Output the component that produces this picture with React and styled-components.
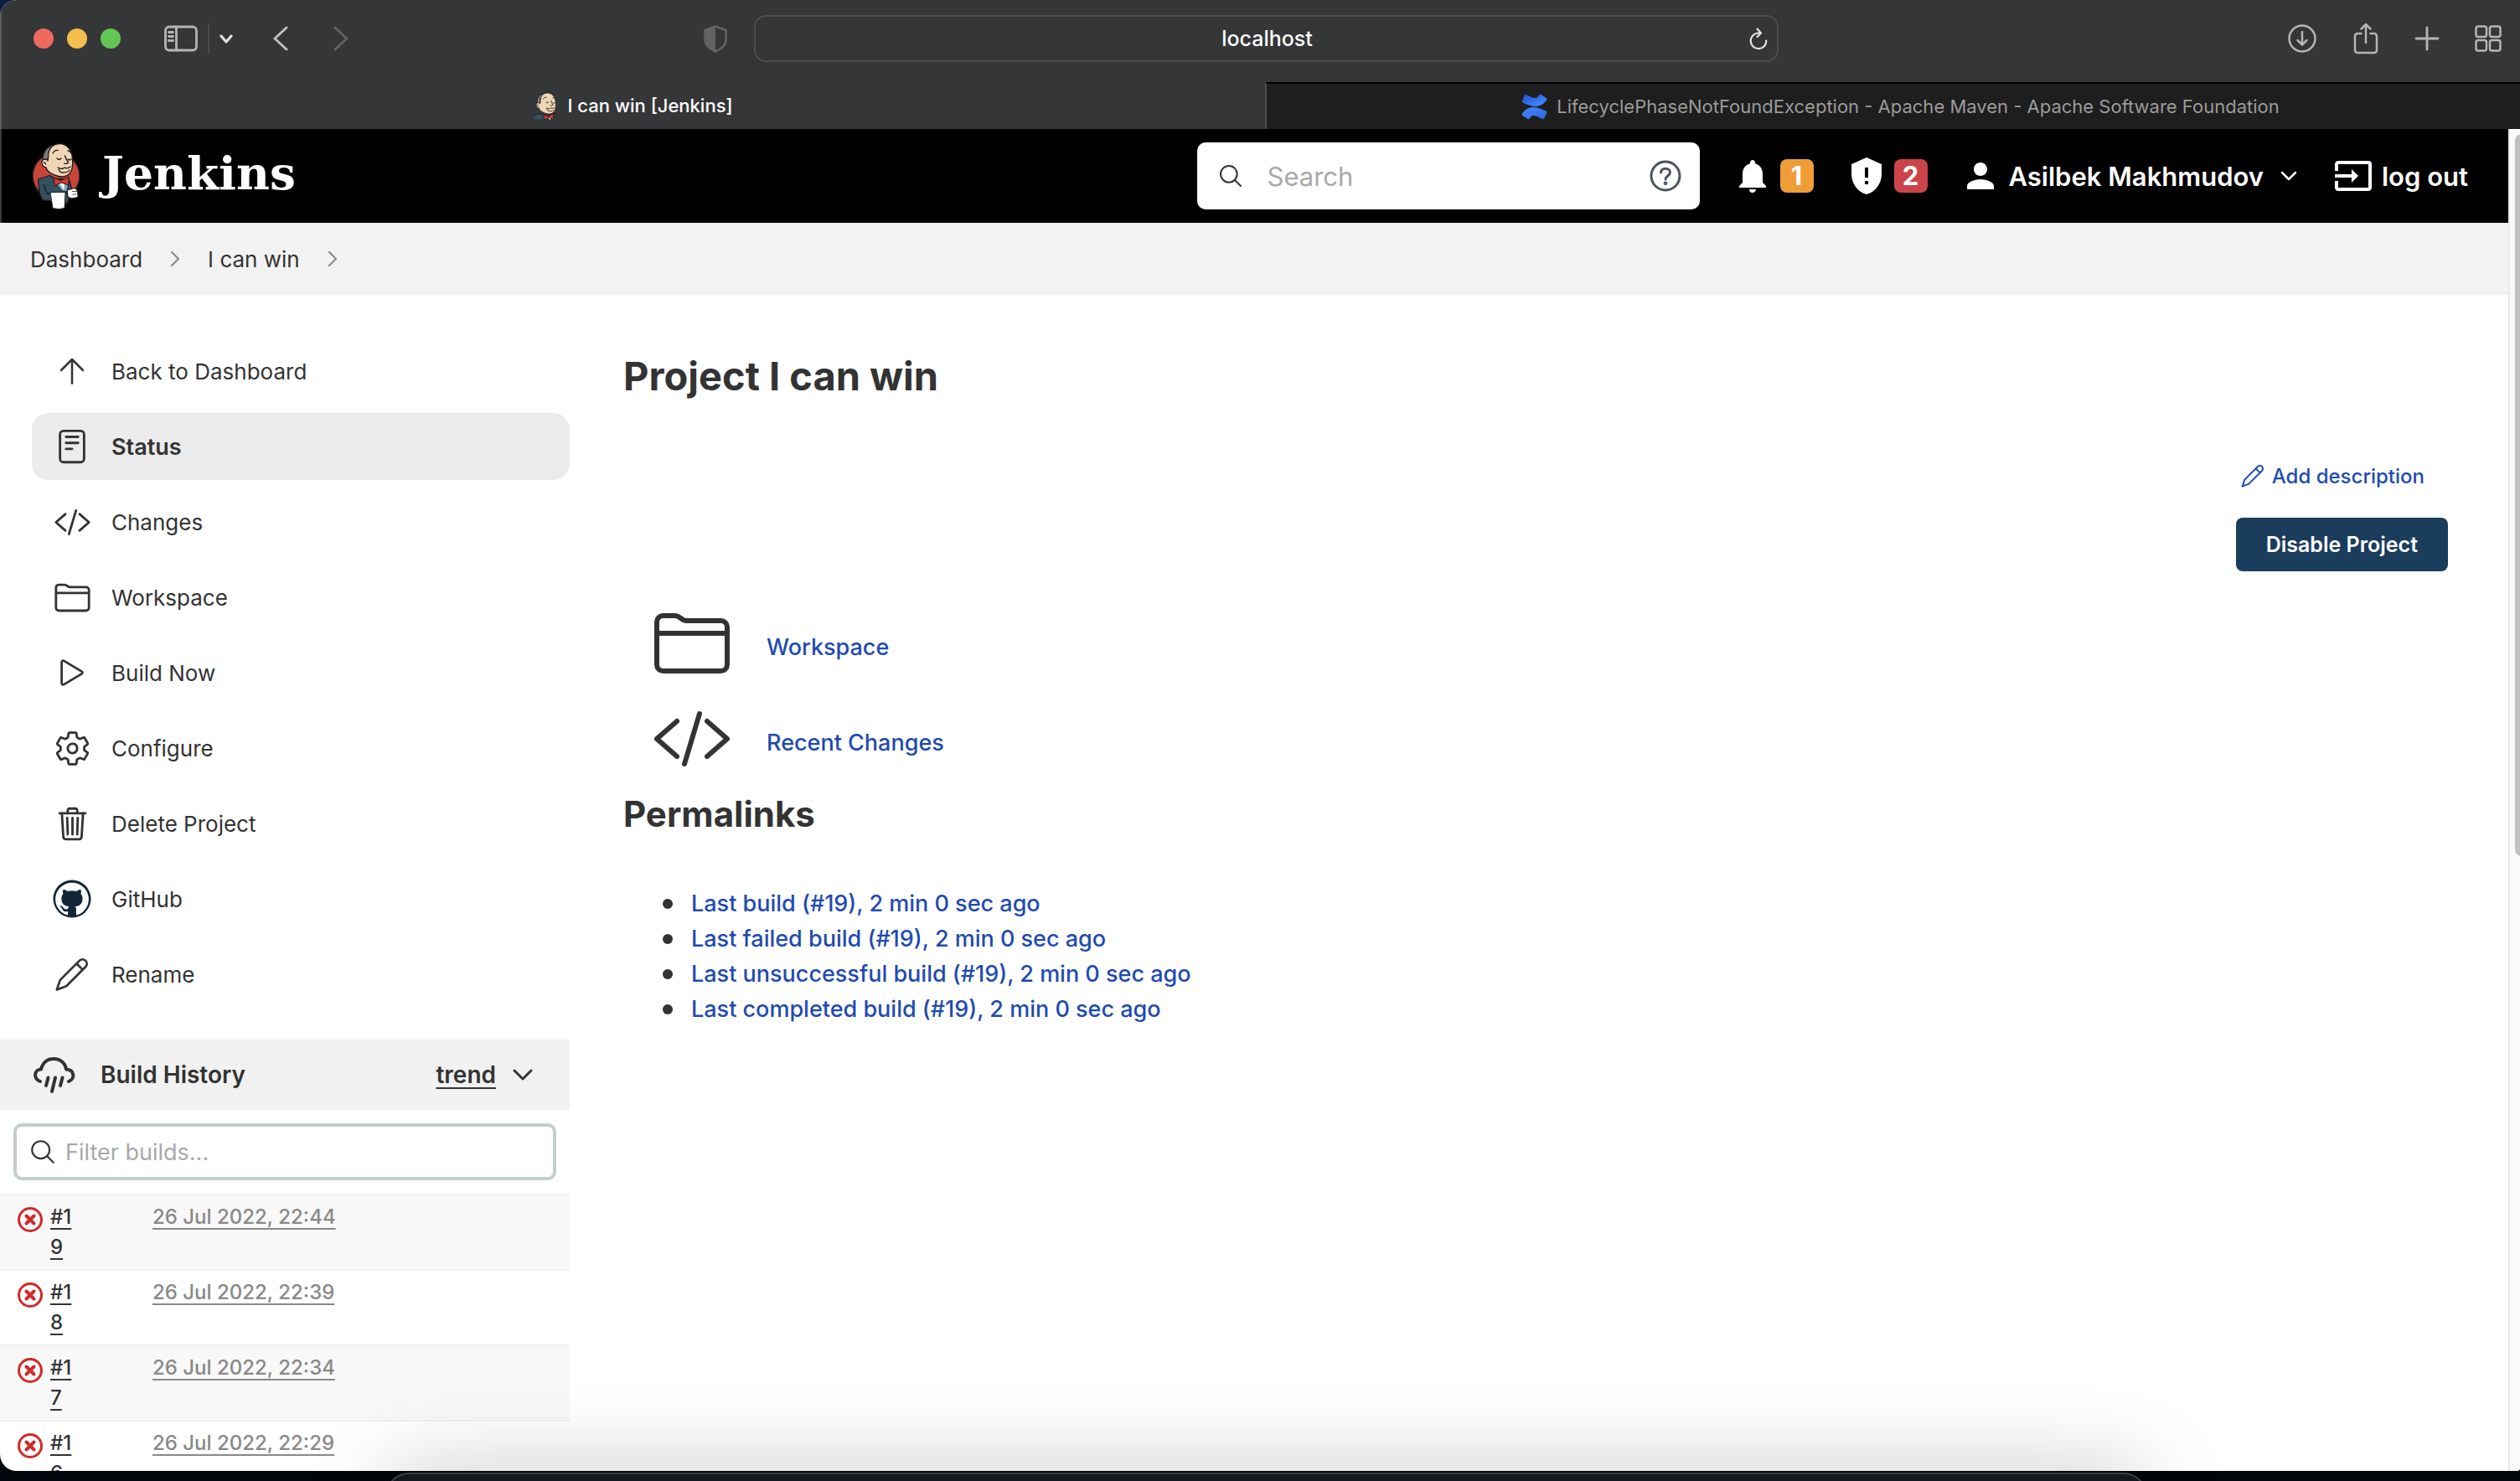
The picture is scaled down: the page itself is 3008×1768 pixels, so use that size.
import React from "react";
import styled, { createGlobalStyle, css } from "styled-components";
import {
  IoReaderOutline,
  IoCodeSlashOutline,
  IoFolderOutline,
  IoPlayOutline,
  IoSettingsOutline,
  IoTrashOutline,
  IoSearchOutline,
} from "react-icons/io5";
import { MdNotifications, MdPerson, MdInput } from "react-icons/md";

const ink = "#333333";
const link = "#1f4bb0";
const sans = `Inter, "Liberation Sans", sans-serif`;

const GlobalStyle = createGlobalStyle`
  *, *::before, *::after { box-sizing: border-box; }
  body { margin: 0; font-family: ${sans}; color: ${ink}; background: #01060d; }
  button, input { font: inherit; color: inherit; background: none; border: 0; padding: 0; margin: 0; outline: 0; }
  a { color: inherit; text-decoration: none; }
  svg { display: block; flex: none; }
`;

/* ---------- desktop and window ---------- */

const Desktop = styled.div`
  display: flex;
  flex-direction: column;
  height: 100vh;
  overflow: hidden;
  background: linear-gradient(#0b2147, #01060d 10%);
`;

const Window = styled.div`
  flex: 1;
  min-height: 0;
  display: flex;
  flex-direction: column;
  overflow: hidden;
  border-radius: 20px 0 4px 20px;
  background: #ffffff;
`;

const DockStrip = styled.footer`
  flex: none;
  height: 12px;
  padding: 2px 445px 0 460px;
`;

const Dock = styled.div`
  height: 60px;
  border: 2px solid #3a3f44;
  border-radius: 28px;
  background: #13181f;
  box-shadow: 0 0 100px rgba(0, 0, 0, 0.26);
`;

/* ---------- browser chrome ---------- */

const Chrome = styled.header`
  flex: none;
  background: #353638;
  box-shadow: inset 2px 0 #5a5b5d;
`;

const Toolbar = styled.div`
  display: grid;
  grid-template-columns: minmax(0, 900fr) minmax(0, 1223fr) minmax(0, 885fr);
  align-items: center;
  height: 98px;
  padding-bottom: 6px;
  color: #b4b5b6;
`;

const ToolGroup = styled.div`
  display: flex;
  align-items: center;
  justify-content: ${(p) => p.$align || "flex-start"};
  gap: ${(p) => p.$gap || 0}px;
  padding: ${(p) => p.$pad || "0"};
`;

const Light = styled.button`
  width: 24px;
  height: 24px;
  border-radius: 50%;
  background: ${(p) => p.$color};
`;

const ToolButton = styled.button`
  display: flex;
  align-items: center;
  justify-content: center;
  color: ${(p) => p.$color || "inherit"};
`;

const Divider = styled.span`
  width: 2px;
  height: 36px;
  background: #4a4b4d;
`;

const Spacer = styled.span`
  flex: 1;
`;

const AddressBar = styled.div`
  display: flex;
  align-items: center;
  height: 56px;
  padding: 0 10px 0 36px;
  border: 2px solid #4c4d4f;
  border-radius: 14px;
  color: #e4e4e4;
`;

const Address = styled.input`
  flex: 1;
  min-width: 0;
  text-align: center;
  font-size: 25px;
  font-weight: 500;
  color: #ffffff;
`;

const TabStrip = styled.div`
  display: grid;
  grid-template-columns: minmax(0, 1510fr) minmax(0, 1498fr);
  height: 56px;
`;

const Tab = styled.button`
  display: flex;
  align-items: center;
  justify-content: center;
  gap: 12px;
  font-size: 22px;
  font-weight: 500;
  color: #ffffff;
  ${(p) =>
    p.$idle &&
    css`
      gap: 10px;
      background: #1e1e1e;
      color: #9b9b9b;
      font-weight: 400;
      border-left: 2px solid #4a4b4d;
      border-top: 2px solid #000000;
      padding-left: 16px;
    `}
`;

/* ---------- page frame ---------- */

const Viewport = styled.div`
  flex: 1;
  min-height: 0;
  display: flex;
`;

const Page = styled.div`
  flex: 1;
  min-width: 0;
  overflow: hidden;
`;

const ScrollTrack = styled.div`
  width: 14px;
  padding: 6px 0 0 6px;
  border-left: 2px solid #e8e8e8;
  background: #fafafa;
  overflow: hidden;
`;

const ScrollThumb = styled.div`
  width: 16px;
  height: 54%;
  border-radius: 8px;
  background: #c1c1c1;
`;

/* ---------- Jenkins header ---------- */

const Masthead = styled.header`
  display: flex;
  align-items: center;
  height: 112px;
  padding: 0 48px 0 38px;
  background: #000000;
  color: #ffffff;
  box-shadow: inset 2px 0 #3a3a3a;
`;

const Brand = styled.a`
  display: flex;
  align-items: center;
  gap: 26px;
  font-family: "DejaVu Serif", serif;
  font-weight: 700;
  font-size: 55px;
  line-height: 64px;
`;

const BrandName = styled.span`
  padding-bottom: 6px;
`;

const SearchBox = styled.label`
  display: flex;
  align-items: center;
  width: 600px;
  height: 80px;
  margin-left: auto;
  padding: 0 22px 0 24px;
  gap: 28px;
  border-radius: 10px;
  background: #ffffff;
  color: ${ink};
`;

const TextInput = styled.input`
  flex: 1;
  min-width: 0;
  font-size: ${(p) => p.$size}px;
  &::placeholder { color: #a9a9a9; opacity: 1; }
`;

const HeaderLink = styled.a`
  display: flex;
  align-items: center;
  gap: ${(p) => p.$gap}px;
  margin-left: ${(p) => p.$space}px;
  font-size: 31px;
  font-weight: 600;
`;

const Badge = styled.span`
  width: 40px;
  height: 40px;
  border-radius: 8px;
  line-height: 40px;
  text-align: center;
  font-weight: 700;
  background: ${(p) => p.$color};
`;

const Crumbs = styled.nav`
  display: flex;
  align-items: center;
  height: 86px;
  padding: 0 36px;
  gap: 33px;
  background: #f2f2f2;
  font-size: 26px;
  color: ${ink};
`;

const CrumbArrow = styled.span`
  color: #8c8c8c;
`;

/* ---------- body ---------- */

const Body = styled.div`
  display: flex;
`;

const Side = styled.aside`
  width: 680px;
  flex: none;
`;

const Tasks = styled.nav`
  display: flex;
  flex-direction: column;
  gap: 10px;
  padding: 51px 0 38px 38px;
`;

const Task = styled.a`
  display: flex;
  align-items: center;
  gap: 24px;
  height: 80px;
  padding-left: 25px;
  border-radius: 20px;
  font-size: 26px;
  ${(p) => p.$active && "background: #ebebeb; font-size: 27px; font-weight: 600;"}
`;

const TaskIcon = styled.span`
  display: flex;
  justify-content: center;
  width: 46px;
`;

const HistoryHead = styled.div`
  display: flex;
  align-items: center;
  justify-content: space-between;
  height: 84px;
  padding: 0 44px 0 38px;
  background: #f1f1f1;
  font-size: 28px;
  font-weight: 600;
`;

const HeadGroup = styled.div`
  display: flex;
  align-items: center;
  gap: ${(p) => p.$gap}px;
`;

const TrendLink = styled.a`
  text-decoration: underline;
  text-decoration-thickness: 2px;
  text-underline-offset: 5px;
`;

const FilterBox = styled.label`
  display: flex;
  align-items: center;
  height: 68px;
  margin: 16px;
  padding: 0 14px;
  gap: 10px;
  border: 4px solid #c3ccd1;
  border-radius: 10px;
`;

const Builds = styled.table`
  width: 100%;
  border-collapse: collapse;
  font-size: 24px;
  line-height: 36px;
`;

const BuildRow = styled.tr`
  border-top: 2px solid #f0f0f0;
  &:nth-child(odd) { background: #f8f8f8; }
`;

const Cell = styled.td`
  width: ${(p) => p.$width || "auto"};
  padding: 8px 0 8px ${(p) => p.$left || 0}px;
  vertical-align: top;
`;

const BuildLink = styled.a`
  display: block;
  width: ${(p) => p.$width || "auto"};
  overflow-wrap: anywhere;
  font-weight: 500;
  color: ${(p) => p.$color || ink};
  text-decoration: underline;
  text-decoration-thickness: 2px;
  text-underline-offset: 5px;
`;

const StatusIcon = styled.span`
  display: block;
  padding-top: 5px;
`;

const Main = styled.main`
  flex: 1;
  min-width: 0;
  padding: 67px 72px 0 64px;
`;

const Title = styled.h1`
  margin: 0;
  font-size: 47px;
  line-height: 60px;
  font-weight: 700;
`;

const Actions = styled.div`
  display: flex;
  flex-direction: column;
  align-items: flex-end;
  gap: 25px;
  padding-top: 64px;
`;

const AddLink = styled.a`
  display: flex;
  align-items: center;
  gap: 8px;
  height: 50px;
  padding-right: 28px;
  font-size: 24px;
  font-weight: 500;
  color: ${link};
`;

const DisableButton = styled.button`
  height: 64px;
  padding: 0 36px;
  border-radius: 8px;
  background: #1b3d5c;
  color: #ffffff;
  font-size: 25px;
  font-weight: 600;
`;

const Shortcuts = styled.div`
  display: flex;
  flex-direction: column;
  gap: 18px;
  padding: 38px 0 0 34px;
`;

const Shortcut = styled.a`
  display: flex;
  align-items: center;
  gap: 41px;
  color: ${ink};
`;

const ShortcutLabel = styled.span`
  padding-top: 8px;
  font-size: 27px;
  font-weight: 550;
  color: ${link};
`;

const Subtitle = styled.h2`
  margin: 16px 0 0;
  font-size: 42px;
  line-height: 52px;
  font-weight: 700;
`;

const Permalinks = styled.ul`
  margin: 60px 0 0;
  padding: 0 0 0 47px;
  list-style: none;
  font-size: 27px;
  line-height: 42px;
`;

const PermalinkItem = styled.li`
  display: flex;
  align-items: center;
  gap: 22px;
  &::before {
    content: "";
    width: 12px;
    height: 12px;
    border-radius: 50%;
    background: ${ink};
  }
`;

const Permalink = styled.a`
  font-weight: 550;
  color: ${link};
`;

/* ---------- drawings ---------- */

const Line = ({ w, h, box, sw = 2.5, children, ...rest }) => (
  <svg width={w} height={h} viewBox={box || `0 0 ${w} ${h}`} fill="none" stroke="currentColor"
    strokeWidth={sw} strokeLinecap="round" strokeLinejoin="round" aria-hidden="true" {...rest}>
    {children}
  </svg>
);

const Chevron = ({ w, h, sw, dir = "down" }) => {
  const d = {
    down: `M2 2L${w / 2} ${h - 2}L${w - 2} 2`,
    left: `M${w - 2} 2L2 ${h / 2}L${w - 2} ${h - 2}`,
    right: `M2 2L${w - 2} ${h / 2}L2 ${h - 2}`,
  }[dir];
  return <Line w={w} h={h} sw={sw}><path d={d} /></Line>;
};

const ArrowUpIcon = () => (
  <Line w={44} h={44}>
    <path d="M9 21L22 8L35 21M22 8.500V36.500" />
  </Line>
);

const PencilIcon = ({ size, sw }) => (
  <Line w={size} h={size} box="0 0 45 45" sw={sw}>
    <path d="M4 41L8 29.500L31.500 6a5.300 5.300 0 0 1 7.500 7.500L15.500 37L4 41.500zM28 9.500L35.500 17" />
  </Line>
);

const SidebarIcon = () => (
  <Line w={40} h={32} sw={2.8}>
    <rect x="1.500" y="2" width="37" height="28" rx="4.500" />
    <path d="M14.500 2v28M5.500 8.500h5M5.500 13.500h5M5.500 18.500h5" />
  </Line>
);

const PrivacyIcon = () => (
  <svg width="28" height="33" viewBox="0 0 28 33" aria-hidden="true">
    <path d="M14 1.500L26.500 6v12c0 6.500-6 10.500-12.500 13.500C7.500 28.500 1.500 24.500 1.500 18V6z" fill="none" stroke="currentColor" strokeWidth="2.500" strokeLinejoin="round" />
    <path d="M14 1.500V31.500C7.500 28.500 1.500 24.500 1.500 18V6z" fill="currentColor" />
  </svg>
);

const ReloadIcon = () => (
  <Line w={24} h={28} sw={2.2}>
    <path d="M14.500 7.500H12A9.300 9.300 0 1 0 21.300 16.500M10.500 2.500L15 7.500L10.500 12" />
  </Line>
);

const DownloadIcon = () => (
  <Line w={36} h={36}>
    <circle cx="18" cy="18" r="15.500" />
    <path d="M18 10v15M12.500 20L18 25.500L23.500 20" />
  </Line>
);

const ShareIcon = () => (
  <Line w={32} h={40}>
    <path d="M10.500 14H6a3 3 0 0 0-3 3v17a3 3 0 0 0 3 3h20a3 3 0 0 0 3-3V17a3 3 0 0 0-3-3h-4.500M16 25V3M10.500 8.500L16 3l5.500 5.500" />
  </Line>
);

const PlusIcon = () => (
  <Line w={30} h={30} sw={2.8}><path d="M15 2v26M2 15h26" /></Line>
);

const GridIcon = () => (
  <Line w={32} h={32}>
    {[[1.5, 1.5], [18, 1.5], [1.5, 18], [18, 18]].map(([x, y]) => (
      <rect key={`${x}-${y}`} x={x} y={y} width="12.500" height="12.500" rx="2.500" />
    ))}
  </Line>
);

const Head = () => (
  <g stroke="#1d1a1a" strokeWidth="1.300" strokeLinejoin="round" strokeLinecap="round">
    <path d="M26 3C18 5 13 10 13 21L18 22L22 12z" fill="#7d7a7a" />
    <path d="M20 12C22 5 27 1.500 33 1.500C41 1.500 47 8 48 16C49 22 49 28 47.500 33C45 40 38 42 32 40.500C25 39 18 35 17 30C11 29 10 20 15.500 20C18 20 19 21 19 22C20 19 19.500 15 20 12z" fill="#f0d6b7" />
    <path d="M14 24q2-1 2.500 2M25 13q2-4 6-3.500M43 10q3 0 4 3M30 19q2.500 3 5 0M43 20q2 2 4 0M39.500 16q1 4 4 8q-2 2.500-5 1M31 30q5 3 8 0q3 2 7-1M32 32q2 5 6 4q5 0 7-3" fill="none" />
  </g>
);

const Bow = () => (
  <path d="M26 42l8.500 3.500L44 41l0 10-9-3-8 4z" fill="#d33833" stroke="#1d1a1a" strokeWidth="1" strokeLinejoin="round" />
);

const Butler = () => (
  <svg width="58" height="80" viewBox="0 0 58 80" aria-hidden="true">
    <ellipse cx="29" cy="40" rx="28" ry="27.500" fill="#c8453a" stroke="#24201f" strokeWidth="1.500" />
    <path d="M7.500 44L21 39.500l8 4 15 .5 4 12-5 15-30-2C9 64 8 54 7.500 44z" fill="#335061" stroke="#1d1a1a" strokeWidth="1.300" strokeLinejoin="round" />
    <path d="M28 48l16-1-2 12-6-1z" fill="#81b0c4" stroke="#1d1a1a" strokeWidth="1" strokeLinejoin="round" />
    <path d="M33 48h6l-1 9z" fill="#ffffff" />
    <path d="M14 50l4 11h24" fill="none" stroke="#1d1a1a" strokeWidth="1.300" />
    <Head />
    <Bow />
    <path d="M22 59.500h18l-1 19q-7 2-14 0z" fill="#ffffff" stroke="#2a2a2a" strokeWidth="1" />
    <path d="M42 57l9-2.500q4.500 1 4 11l-8 1.500-4-2z" fill="#ffffff" stroke="#1d1a1a" strokeWidth="1.200" />
    <path d="M48 58.500h6M48.500 62h5M41 67l1 7" fill="none" stroke="#555555" strokeWidth="1" />
  </svg>
);

const ButlerFavicon = () => (
  <svg width="30" height="33" viewBox="4 0 47 52" aria-hidden="true">
    <path d="M4 52q1-9 14-11l14 4 10 0q8 2 8 7z" fill="#335061" stroke="#1d1a1a" />
    <path d="M33 46h6l-1 7z" fill="#ffffff" />
    <Head />
    <Bow />
  </svg>
);

const ConfluenceIcon = () => (
  <svg width="33" height="33" viewBox="0 0 33 33" aria-hidden="true">
    <defs>
      <linearGradient id="cf-a" x1="0" y1="0" x2="1" y2="1">
        <stop offset="0.200" stopColor="#3f80f7" /><stop offset="1" stopColor="#2f68e4" />
      </linearGradient>
      <linearGradient id="cf-b" x1="0" y1="0" x2="1" y2="1">
        <stop offset="0.100" stopColor="#2456d0" /><stop offset="0.700" stopColor="#3f80f7" />
      </linearGradient>
    </defs>
    <path d="M2 24.500c-.8 1.200-.5 2 .3 2.600l6.300 3.900c.9.500 1.700.3 2.300-.6 2.600-4.300 5-4.200 9.500-2.100l5.800 2.700c.9.400 1.800 0 2.200-.9l2.800-6.500c.4-.9 0-1.700-.8-2.100C18.500 15.500 9 14.500 2 24.500z" fill="url(#cf-a)" />
    <path d="M31 8.500c.8-1.200.5-2-.3-2.600L24.400 2c-.9-.5-1.700-.3-2.300.6-2.600 4.300-5 4.200-9.500 2.100L6.800 2c-.9-.4-1.800 0-2.200.9L1.800 9.400c-.4.900 0 1.700.8 2.100C14.500 17.500 24 18.500 31 8.500z" fill="url(#cf-b)" />
  </svg>
);

const HelpIcon = () => (
  <Line w={38} h={38} sw={3}>
    <g stroke="#4d545d">
      <circle cx="19" cy="19" r="17" />
      <path d="M13.500 15c.3-3.500 2.600-4.800 5.500-4.800 3.200 0 5.500 1.800 5.500 4.600 0 4.200-5.500 4.200-5.500 8.200" />
      <circle cx="19" cy="27.800" r="0.900" fill="#4d545d" />
    </g>
  </Line>
);

const ShieldAlertIcon = () => (
  <svg width="48" height="48" viewBox="0 0 24 24" fill="currentColor" fillRule="evenodd" aria-hidden="true">
    <path d="M12 1L3 5v6c0 5.550 3.840 10.740 9 12 5.160-1.260 9-6.450 9-12V5l-9-4zM11 7h2v6h-2zM11 15h2v2h-2z" />
  </svg>
);

const GithubIcon = () => (
  <svg width="46" height="46" viewBox="0 0 46 46" aria-hidden="true">
    <circle cx="23" cy="23" r="22.500" fill="#132638" />
    <g transform="translate(3.200 3.200) scale(1.650)">
      <path fill="#ffffff" d="M12 .3a12 12 0 0 0-3.800 23.400c.6.100.8-.3.800-.6v-2c-3.300.7-4-1.600-4-1.600-.6-1.400-1.400-1.800-1.400-1.800-1-.7.1-.7.100-.7 1.200 0 1.900 1.200 1.900 1.200 1 1.800 2.800 1.300 3.500 1 0-.8.400-1.300.7-1.600-2.700-.3-5.500-1.300-5.500-6 0-1.200.5-2.300 1.300-3.100-.2-.4-.6-1.600 0-3.200 0 0 1-.3 3.400 1.200a11.500 11.500 0 0 1 6 0c2.300-1.500 3.300-1.200 3.300-1.200.6 1.600.2 2.800 0 3.200.9.800 1.300 1.900 1.300 3.200 0 4.600-2.800 5.600-5.500 5.900.5.400.9 1 .9 2.200v3.300c0 .3.100.7.800.6A12 12 0 0 0 12 .3" />
    </g>
  </svg>
);

const RainIcon = () => (
  <Line w={52} h={46} sw={4}>
    <path d="M10 31C2 28 2 17 11 16.500C13 8 19 4 26 4c8 0 14 5 15 12.500C51 17 52 28 44 31" />
    <path d="M19.500 26.500L17 36M28 26.500L24 43M36.500 26.500L34 36" />
  </Line>
);

const FailedIcon = () => (
  <svg width="32" height="32" viewBox="0 0 32 32" fill="none" stroke="#d02a2a" role="img" aria-label="Failed">
    <circle cx="16" cy="16" r="13.500" strokeWidth="3" />
    <path d="M11.500 11.500l9 9M20.500 11.500l-9 9" strokeWidth="4" strokeLinecap="round" />
  </svg>
);

/* ---------- content ---------- */

const tasks = [
  { label: "Back to Dashboard", icon: <ArrowUpIcon /> },
  { label: "Status", icon: <IoReaderOutline size={46} />, active: true },
  { label: "Changes", icon: <IoCodeSlashOutline size={45} /> },
  { label: "Workspace", icon: <IoFolderOutline size={45} /> },
  { label: "Build Now", icon: <IoPlayOutline size={44} /> },
  { label: "Configure", icon: <IoSettingsOutline size={45} /> },
  { label: "Delete Project", icon: <IoTrashOutline size={45} /> },
  { label: "GitHub", icon: <GithubIcon /> },
  { label: "Rename", icon: <PencilIcon size={44} sw={2.8} /> },
];

const builds = [
  { id: "#19", date: "26 Jul 2022, 22:44" },
  { id: "#18", date: "26 Jul 2022, 22:39" },
  { id: "#17", date: "26 Jul 2022, 22:34" },
  { id: "#16", date: "26 Jul 2022, 22:29" },
];

const permalinks = [
  "Last build (#19), 2 min 0 sec ago",
  "Last failed build (#19), 2 min 0 sec ago",
  "Last unsuccessful build (#19), 2 min 0 sec ago",
  "Last completed build (#19), 2 min 0 sec ago",
];

function BrowserChrome() {
  return (
    <Chrome>
      <Toolbar>
        <ToolGroup $pad="0 32px 0 40px">
          <ToolGroup $gap={16}>
            <Light $color="#ee6a5f" aria-label="Close" />
            <Light $color="#f5bf4f" aria-label="Minimise" />
            <Light $color="#62c655" aria-label="Zoom" />
          </ToolGroup>
          <ToolGroup $gap={12} $pad="0 0 0 52px">
            <ToolButton aria-label="Sidebar"><SidebarIcon /></ToolButton>
            <Divider />
            <ToolButton aria-label="Tab groups" $color="#e0e0e0"><Chevron w={16} h={11} sw={3.2} /></ToolButton>
          </ToolGroup>
          <ToolGroup $gap={54} $pad="0 0 0 48px">
            <ToolButton aria-label="Back" $color="#c0c1c2"><Chevron w={18} h={30} sw={3} dir="left" /></ToolButton>
            <ToolButton aria-label="Forward" $color="#616264"><Chevron w={18} h={30} sw={3} dir="right" /></ToolButton>
          </ToolGroup>
          <Spacer />
          <ToolButton aria-label="Privacy report" $color="#626365"><PrivacyIcon /></ToolButton>
        </ToolGroup>
        <AddressBar>
          <Address aria-label="Address" defaultValue="localhost" />
          <ToolButton aria-label="Reload"><ReloadIcon /></ToolButton>
        </AddressBar>
        <ToolGroup $align="flex-end" $gap={42} $pad="0 22px 0 0">
          <ToolButton aria-label="Downloads"><DownloadIcon /></ToolButton>
          <ToolButton aria-label="Share"><ShareIcon /></ToolButton>
          <ToolButton aria-label="New tab"><PlusIcon /></ToolButton>
          <ToolButton aria-label="Tab overview"><GridIcon /></ToolButton>
        </ToolGroup>
      </Toolbar>
      <TabStrip>
        <Tab><ButlerFavicon />I can win [Jenkins]</Tab>
        <Tab $idle><ConfluenceIcon />LifecyclePhaseNotFoundException - Apache Maven - Apache Software Foundation</Tab>
      </TabStrip>
    </Chrome>
  );
}

function JenkinsHeader() {
  return (
    <Masthead>
      <Brand href="#"><Butler /><BrandName>Jenkins</BrandName></Brand>
      <SearchBox>
        <IoSearchOutline size={32} />
        <TextInput $size={31} placeholder="Search" aria-label="Search" />
        <HelpIcon />
      </SearchBox>
      <HeaderLink href="#" $gap={9} $space={39} aria-label="Notifications">
        <MdNotifications size={48} /><Badge $color="#f09d38">1</Badge>
      </HeaderLink>
      <HeaderLink href="#" $gap={9} $space={39} aria-label="Security warnings">
        <ShieldAlertIcon /><Badge $color="#cb444a">2</Badge>
      </HeaderLink>
      <HeaderLink href="#" $gap={10} $space={39}>
        <MdPerson size={48} />Asilbek Makhmudov
      </HeaderLink>
      <HeaderLink href="#" $gap={0} $space={20} aria-label="User menu"><Chevron w={20} h={12} sw={2.5} /></HeaderLink>
      <HeaderLink href="#" $gap={10} $space={43}><MdInput size={48} />log out</HeaderLink>
    </Masthead>
  );
}

function SidePanel() {
  return (
    <Side>
      <Tasks>
        {tasks.map((t) => (
          <Task key={t.label} href="#" $active={t.active}><TaskIcon>{t.icon}</TaskIcon>{t.label}</Task>
        ))}
      </Tasks>
      <HistoryHead>
        <HeadGroup $gap={30}>
          <RainIcon />
          <span>Build History</span>
        </HeadGroup>
        <HeadGroup $gap={20}>
          <TrendLink href="#">trend</TrendLink>
          <Chevron w={24} h={14} sw={3} />
        </HeadGroup>
      </HistoryHead>
      <FilterBox>
        <IoSearchOutline size={34} />
        <TextInput $size={27} placeholder="Filter builds..." aria-label="Filter builds" />
      </FilterBox>
      <Builds>
        <tbody>
          {builds.map((b) => (
            <BuildRow key={b.id}>
              <Cell $width="60px" $left={20}><StatusIcon><FailedIcon /></StatusIcon></Cell>
              <Cell $width="122px"><BuildLink href="#" $width="32px">{b.id}</BuildLink></Cell>
              <Cell><BuildLink href="#" $color="#888888">{b.date}</BuildLink></Cell>
            </BuildRow>
          ))}
        </tbody>
      </Builds>
    </Side>
  );
}

function Project() {
  return (
    <Main>
      <Title>Project I can win</Title>
      <Actions>
        <AddLink href="#"><PencilIcon size={30} sw={3} />Add description</AddLink>
        <DisableButton>Disable Project</DisableButton>
      </Actions>
      <Shortcuts>
        <Shortcut href="#"><IoFolderOutline size={96} /><ShortcutLabel>Workspace</ShortcutLabel></Shortcut>
        <Shortcut href="#"><IoCodeSlashOutline size={96} /><ShortcutLabel>Recent Changes</ShortcutLabel></Shortcut>
      </Shortcuts>
      <Subtitle>Permalinks</Subtitle>
      <Permalinks>
        {permalinks.map((p) => (
          <PermalinkItem key={p}><Permalink href="#">{p}</Permalink></PermalinkItem>
        ))}
      </Permalinks>
    </Main>
  );
}

export default function App() {
  return (
    <Desktop>
      <GlobalStyle />
      <Window>
        <BrowserChrome />
        <Viewport>
          <Page>
            <JenkinsHeader />
            <Crumbs>
              <a href="#">Dashboard</a>
              <CrumbArrow><Chevron w={12} h={20} sw={2.2} dir="right" /></CrumbArrow>
              <a href="#">I can win</a>
              <CrumbArrow><Chevron w={12} h={20} sw={2.2} dir="right" /></CrumbArrow>
            </Crumbs>
            <Body>
              <SidePanel />
              <Project />
            </Body>
          </Page>
          <ScrollTrack><ScrollThumb /></ScrollTrack>
        </Viewport>
      </Window>
      <DockStrip><Dock /></DockStrip>
    </Desktop>
  );
}
